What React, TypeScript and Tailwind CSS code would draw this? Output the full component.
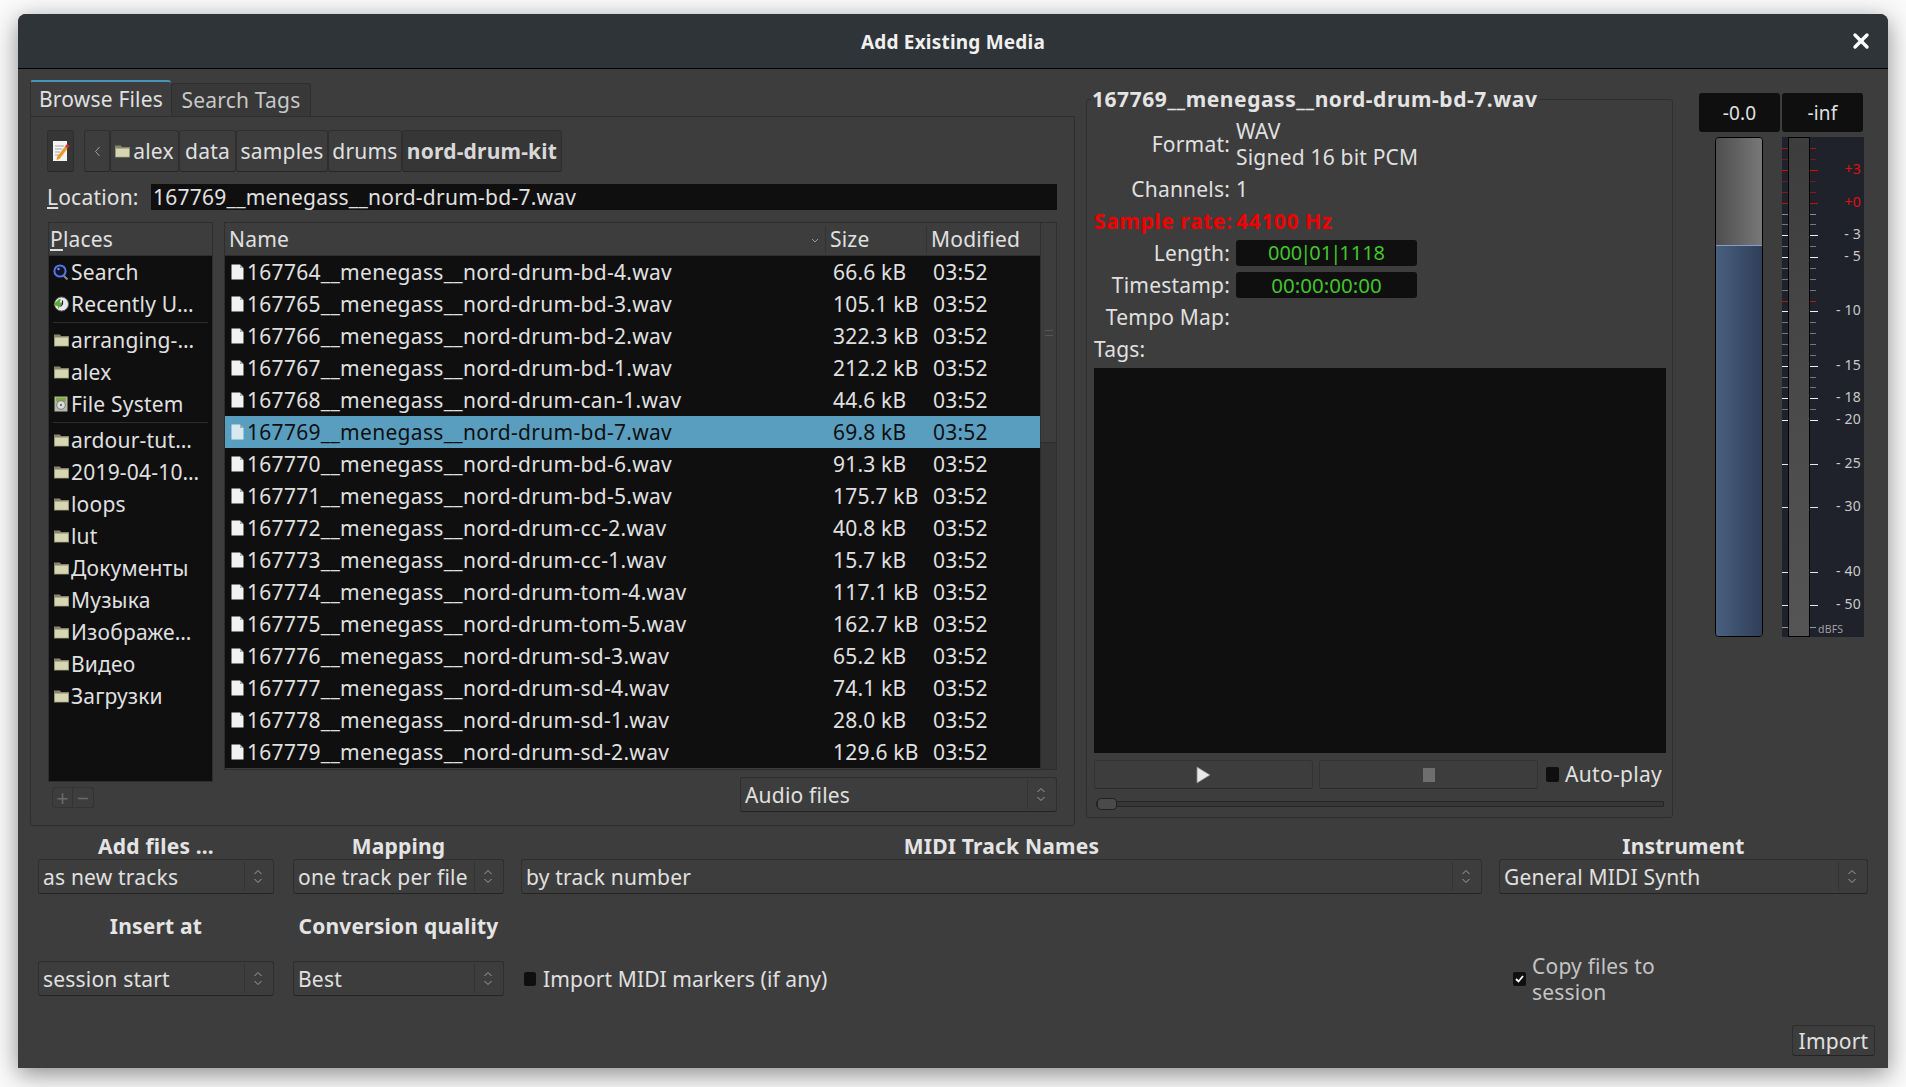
import { X } from "lucide-react";

const files = [
  ["167764__menegass__nord-drum-bd-4.wav", "66.6 kB"],
  ["167765__menegass__nord-drum-bd-3.wav", "105.1 kB"],
  ["167766__menegass__nord-drum-bd-2.wav", "322.3 kB"],
  ["167767__menegass__nord-drum-bd-1.wav", "212.2 kB"],
  ["167768__menegass__nord-drum-can-1.wav", "44.6 kB"],
  ["167769__menegass__nord-drum-bd-7.wav", "69.8 kB"],
  ["167770__menegass__nord-drum-bd-6.wav", "91.3 kB"],
  ["167771__menegass__nord-drum-bd-5.wav", "175.7 kB"],
  ["167772__menegass__nord-drum-cc-2.wav", "40.8 kB"],
  ["167773__menegass__nord-drum-cc-1.wav", "15.7 kB"],
  ["167774__menegass__nord-drum-tom-4.wav", "117.1 kB"],
  ["167775__menegass__nord-drum-tom-5.wav", "162.7 kB"],
  ["167776__menegass__nord-drum-sd-3.wav", "65.2 kB"],
  ["167777__menegass__nord-drum-sd-4.wav", "74.1 kB"],
  ["167778__menegass__nord-drum-sd-1.wav", "28.0 kB"],
  ["167779__menegass__nord-drum-sd-2.wav", "129.6 kB"],
];

const bookmarks = ["ardour-tut…", "2019-04-10…", "loops", "lut", "Документы", "Музыка", "Изображе…", "Видео", "Загрузки"];

// y offset inside the meter strip, colour, long tick or not
const ticks: [number, string, boolean][] = [
  [11, "#a01818", false], [22, "#6e1c1c", false], [33, "#f00000", true], [44, "#6e1c1c", false],
  [55, "#8a1818", false], [66, "#c01010", true], [77, "#8a8a8a", false], [87, "#777777", false],
  [98, "#f0f0f0", true], [109, "#777777", false], [120, "#f0f0f0", true], [131, "#777777", false],
  [142, "#777777", false], [153, "#777777", false], [164, "#b01818", false], [174, "#f0f0f0", true],
  [185, "#777777", false], [196, "#777777", false], [207, "#777777", false], [218, "#777777", false],
  [229, "#f0f0f0", true], [240, "#777777", false], [250, "#777777", false], [261, "#f0f0f0", true],
  [272, "#777777", false], [283, "#f0f0f0", true], [327, "#e8e8e8", true], [370, "#e8e8e8", true],
  [435, "#e8e8e8", true], [468, "#e8e8e8", true], [490, "#999999", false],
];

const scaleLabels: [number, string, string][] = [
  [33, "+3", "#e01010"], [66, "+0", "#e01010"], [98, "- 3", "#c8c8c8"], [120, "- 5", "#c8c8c8"],
  [174, "- 10", "#c8c8c8"], [229, "- 15", "#c8c8c8"], [261, "- 18", "#c8c8c8"], [283, "- 20", "#c8c8c8"],
  [327, "- 25", "#c8c8c8"], [370, "- 30", "#c8c8c8"], [435, "- 40", "#c8c8c8"], [468, "- 50", "#c8c8c8"],
];

function FileIcon({ dim }: { dim?: boolean }) {
  return (
    <svg width="13" height="16" viewBox="0 0 13 16" className="shrink-0">
      <path d="M0.5 0.5H9L12.5 4V15.5H0.5Z" fill={dim ? "#d8e8f0" : "#f2f2f2"} />
      <path d="M9 0.5V4H12.5Z" fill="#a8a8a8" />
    </svg>
  );
}

function FolderIcon() {
  return (
    <svg width="15" height="14" viewBox="0 0 15 14" className="shrink-0">
      <path d="M0 1.5H6L7 3H15V13.5H0Z" fill="#85856a" />
      <path d="M0.8 4.5H14.2V12.8H0.8Z" fill="#d6d6b2" />
    </svg>
  );
}

function SearchIcon() {
  return (
    <svg width="16" height="17" viewBox="0 0 16 17" className="shrink-0">
      <path d="M10 11L14.5 15.5" stroke="#8a8a8a" strokeWidth="2" />
      <circle cx="7" cy="7" r="5.6" fill="#12122a" stroke="#4f78e6" strokeWidth="2" />
      <circle cx="5.5" cy="5" r="1.2" fill="#7f9ad8" />
    </svg>
  );
}

function RecentIcon() {
  return (
    <svg width="16" height="16" viewBox="0 0 16 16" className="shrink-0">
      <circle cx="8.5" cy="8" r="7" fill="#e8e8e8" stroke="#666666" />
      <path d="M0.5 8.5L6 3L8 3.5L6.5 6.5H10L5 13L5 10.5Z" fill="#5aa83a" />
      <path d="M9.5 4.5V8L7.5 10.5" fill="none" stroke="#222222" strokeWidth="1.2" />
    </svg>
  );
}

function DiskIcon() {
  return (
    <svg width="14" height="16" viewBox="0 0 14 16" className="shrink-0">
      <rect x="0.5" y="0.5" width="13" height="15" fill="#b8b8a8" />
      <path d="M2 1.5H12V5L7 8L2 5Z" fill="#7fae3e" />
      <circle cx="7" cy="9" r="4.3" fill="#dcdcdc" stroke="#7a7a7a" />
      <circle cx="7" cy="9" r="1.2" fill="#7a7a7a" />
    </svg>
  );
}

function NoteIcon() {
  return (
    <svg width="18" height="22" viewBox="0 0 18 22">
      <rect x="1" y="1" width="14" height="20" fill="#f4f4f4" />
      <path d="M3 6H12M3 9H10M3 12H8M3 15H7" stroke="#a5a5a5" />
      <path d="M5 17L13 6.5L15.5 8.5L7.5 19L4.5 20Z" fill="#e89a2c" />
      <path d="M13 6.5L15 4L17.5 6L15.5 8.5Z" fill="#d83030" />
    </svg>
  );
}

function Combo({ text, className }: { text: string; className?: string }) {
  return (
    <div className={`flex h-[35px] items-center rounded-[3px] border border-[#2e2e2e] border-b-[#242424] bg-[#3d3d3d] pl-[4px] pr-[2px] ${className ?? ""}`}>
      <span className="flex-1 overflow-hidden whitespace-nowrap text-[#e0e0e0]">{text}</span>
      <div className="flex h-[29px] w-[27px] shrink-0 items-center justify-center border-l border-[#333333]">
        <svg width="10" height="15" viewBox="0 0 10 15" fill="none" stroke="#a0a0a0" strokeWidth="1">
          <path d="M1.5 5L5 1.5L8.5 5M1.5 10L5 13.5L8.5 10" />
        </svg>
      </div>
    </div>
  );
}

function Crumb({ children, className }: { children: React.ReactNode; className?: string }) {
  return (
    <div className={`flex h-[42px] shrink-0 items-center justify-center rounded-[3px] border border-[#2f2f2f] border-b-[#272727] bg-[#3d3d3d] ${className ?? ""}`}>
      {children}
    </div>
  );
}

function BoldLabel({ children }: { children: React.ReactNode }) {
  return <div className="flex h-[27px] items-center justify-center whitespace-nowrap font-bold text-[#e4e4e4]">{children}</div>;
}

function Place({ icon, label }: { icon: React.ReactNode; label: string }) {
  return (
    <div className="flex h-[32px] items-center gap-[2px] pl-[4px]">
      <span className="flex w-[16px] justify-center">{icon}</span>
      <span className="whitespace-nowrap">{label}</span>
    </div>
  );
}

function Meter() {
  return (
    <svg width="82" height="500" viewBox="0 0 82 500" className="block">
      <defs>
        <linearGradient id="bar" x1="0" y1="0" x2="0" y2="1">
          <stop offset="0" stopColor="#3d3d3d" />
          <stop offset="1" stopColor="#555555" />
        </linearGradient>
      </defs>
      <rect width="82" height="500" fill="#1f222a" />
      {ticks.map(([y, color, long]) => (
        <g key={y} fill={color}>
          <rect x="0" y={y} width="6" height="1" />
          <rect x="28" y={y} width={long ? 8 : 6} height="1" />
        </g>
      ))}
      <rect x="6.5" y="0.5" width="21" height="499" fill="url(#bar)" stroke="#000000" />
      {scaleLabels.map(([y, label, color]) => (
        <text key={label} x="79" y={y + 4} textAnchor="end" fontSize="14" fill={color} fontFamily="'Noto Sans', sans-serif">
          {label}
        </text>
      ))}
      <text x="36" y="496" fontSize="10.5" fill="#a0a0a0" fontFamily="'Noto Sans', sans-serif">dBFS</text>
    </svg>
  );
}

export default function App() {
  return (
    <div className="h-[1087px] w-[1906px] overflow-hidden bg-[#fafafa] pl-[18px] pt-[14px] font-['Noto_Sans',sans-serif] text-[21px] leading-[26px] tracking-[0.2px] text-[#e0e0e0]">
      <div className="flex h-[1054px] w-[1870px] flex-col rounded-t-[8px] bg-[#3d3d3d] shadow-[0_6px_24px_rgba(0,0,0,0.45)]">
        {/* Title bar */}
        <div className="relative flex h-[55px] shrink-0 items-center justify-center rounded-t-[8px] border-b border-black bg-[#2f3438] pt-[2px] text-[19px] font-bold text-[#f0f0f0]">
          Add Existing Media
          <X className="absolute right-[15px] top-[15px] h-[24px] w-[24px] text-white" strokeWidth={3.4} />
        </div>

        <div className="flex flex-col pl-[12px] pt-[11px]">
          <div className="flex h-[746px]">
            {/* Notebook */}
            <div className="flex w-[1045px] shrink-0 flex-col">
              <div className="flex h-[36px] items-end">
                <div className="flex h-[36px] w-[141px] items-center justify-center rounded-t-[3px] border-l border-t-2 border-[#4a94bb] border-l-[#2e2e2e] bg-[#3d3d3d]">
                  Browse Files
                </div>
                <div className="flex h-[33px] w-[140px] items-center justify-center rounded-t-[3px] border border-b-0 border-[#2e2e2e] bg-[#383838] text-[#c8c8c8]">
                  Search Tags
                </div>
              </div>
              <div className="h-[710px] rounded-b-[3px] border border-[#2e2e2e] px-[16px] pt-[13px]">
                {/* Path bar */}
                <div className="flex h-[42px]">
                  <Crumb className="w-[27px] bg-[#363636]"><NoteIcon /></Crumb>
                  <div className="w-[10px]" />
                  <Crumb className="w-[26px]">
                    <svg width="7" height="11" viewBox="0 0 7 11" fill="none" stroke="#a0a0a0"><path d="M5.5 1L1.5 5.5L5.5 10" /></svg>
                  </Crumb>
                  <Crumb className="w-[69px] gap-[3px]"><FolderIcon /><span>alex</span></Crumb>
                  <Crumb className="w-[57px]">data</Crumb>
                  <Crumb className="w-[92px]">samples</Crumb>
                  <Crumb className="w-[74px]">drums</Crumb>
                  <Crumb className="w-[160px] bg-[#363636] font-bold text-[#d8d8d8]">nord-drum-kit</Crumb>
                </div>

                {/* Location */}
                <div className="mt-[12px] flex h-[26px] items-center">
                  <span className="w-[104px] shrink-0"><span className="underline underline-offset-2">L</span>ocation:</span>
                  <div className="flex h-[26px] w-[906px] items-center bg-[#0f0f0f] pl-[2px] tracking-[0.25px]">167769__menegass__nord-drum-bd-7.wav</div>
                </div>

                <div className="mt-[12px] flex">
                  {/* Places */}
                  <div className="ml-px w-[165px] shrink-0">
                    <div className="h-[560px] border border-[#2e2e2e] bg-[#0f0f0f]">
                      <div className="flex h-[33px] items-center border-b border-[#2e2e2e] bg-[#3d3d3d] pl-px">
                        <span><span className="underline underline-offset-2">P</span>laces</span>
                      </div>
                      <Place icon={<SearchIcon />} label="Search" />
                      <Place icon={<RecentIcon />} label="Recently U…" />
                      <div className="mx-[4px] mb-px mt-[2px] h-px bg-[#2e2e2e]" />
                      <Place icon={<FolderIcon />} label="arranging-…" />
                      <Place icon={<FolderIcon />} label="alex" />
                      <Place icon={<DiskIcon />} label="File System" />
                      <div className="mx-[4px] mb-px mt-[2px] h-px bg-[#2e2e2e]" />
                      {bookmarks.map((b) => (
                        <Place key={b} icon={<FolderIcon />} label={b} />
                      ))}
                    </div>
                    <div className="ml-[4px] mt-[5px] flex h-[21px] text-[#6a6a6a]">
                      <div className="flex w-[21px] items-center justify-center rounded-l-[3px] border border-[#333333]">+</div>
                      <div className="flex w-[21px] items-center justify-center rounded-r-[3px] border border-l-0 border-[#333333]">−</div>
                    </div>
                  </div>

                  {/* File list */}
                  <div className="ml-[11px] flex w-[833px] flex-col">
                    <div className="flex h-[548px] border border-[#2e2e2e]">
                      <div className="min-w-0 flex-1">
                        <div className="flex h-[33px] items-center border-b border-[#2e2e2e]">
                          <div className="relative flex h-[27px] w-[601px] items-center border-r border-[#333333] pl-[4px]">
                            Name
                            <svg width="8" height="5" viewBox="0 0 8 5" fill="none" stroke="#999999" className="absolute right-[6px] top-[12px]"><path d="M1 1L4 4L7 1" /></svg>
                          </div>
                          <div className="flex h-[27px] w-[101px] items-center border-r border-[#333333] pl-[4px]">Size</div>
                          <div className="pl-[4px]">Modified</div>
                        </div>
                        <div className="bg-[#0f0f0f]">
                          {files.map(([name, size], i) => (
                            <div
                              key={name}
                              className={i === 5
                                ? "flex h-[32px] items-center bg-[#5a9ebf] pl-[6px] text-[#0f0f0f]"
                                : "flex h-[32px] items-center pl-[6px]"}
                            >
                              <span className="flex w-[16px] shrink-0"><FileIcon dim={i === 5} /></span>
                              <span className="w-[586px] shrink-0 whitespace-nowrap tracking-[0.3px]">{name}</span>
                              <span className="w-[100px] shrink-0 whitespace-nowrap">{size}</span>
                              <span>03:52</span>
                            </div>
                          ))}
                        </div>
                      </div>
                      {/* Scrollbar */}
                      <div className="w-[16px] shrink-0 border-l border-[#2e2e2e] bg-[#363636]">
                        <div className="flex h-[220px] items-center justify-center border-b border-[#2e2e2e] bg-[#3d3d3d]">
                          <div className="h-[6px] w-[8px] border-y border-[#555555]" />
                        </div>
                      </div>
                    </div>
                    <div className="mt-[7px] self-end">
                      <Combo text="Audio files" className="w-[317px]" />
                    </div>
                  </div>
                </div>
              </div>
            </div>

            {/* Sound file info */}
            <div className="relative ml-[11px] mt-[19px] h-[719px] w-[587px] shrink-0 rounded-[3px] border border-[#2e2e2e] px-[7px] pt-[18px]">
              <div className="absolute -top-[14px] left-[4px] whitespace-nowrap bg-[#3d3d3d] px-[1px] font-bold tracking-[0.55px] text-[#e4e4e4]">
                167769__menegass__nord-drum-bd-7.wav
              </div>
              <div className="flex flex-col gap-[6px]">
                <div className="flex items-center gap-[6px]">
                  <span className="w-[136px] text-right">Format:</span>
                  <div>WAV<br />Signed 16 bit PCM</div>
                </div>
                <div className="flex gap-[6px]">
                  <span className="w-[136px] text-right">Channels:</span>
                  <span>1</span>
                </div>
                <div className="flex gap-[6px] font-bold tracking-[0.6px] text-[#f00000]">
                  <span className="w-[136px] whitespace-nowrap text-right">Sample rate:</span>
                  <span>44100 Hz</span>
                </div>
                <div className="flex gap-[6px]">
                  <span className="w-[136px] text-right">Length:</span>
                  <div className="h-[26px] w-[181px] rounded-[3px] bg-[#0f0f0f] text-center text-[20px] tracking-normal text-[#43c52a]">
                    000<span className="-mx-[2px]">|</span>01<span className="-mx-[2px]">|</span>1118
                  </div>
                </div>
                <div className="flex gap-[6px]">
                  <span className="w-[136px] text-right">Timestamp:</span>
                  <div className="h-[26px] w-[181px] rounded-[3px] bg-[#0f0f0f] text-center text-[20.5px] tracking-normal text-[#43c52a]">00:00:00:00</div>
                </div>
                <div className="flex gap-[6px]">
                  <span className="w-[136px] whitespace-nowrap text-right">Tempo Map:</span>
                </div>
                <div>Tags:</div>
              </div>
              <div className="mt-[6px] h-[385px] w-[572px] bg-[#0f0f0f]" />
              <div className="mt-[7px] flex h-[29px] items-center">
                <div className="flex h-[29px] w-[219px] items-center justify-center rounded-[3px] border border-[#333333] border-b-[#2a2a2a]">
                  <svg width="15" height="18" viewBox="0 0 15 18"><path d="M1 1L14 9L1 17Z" fill="#e8e8e8" stroke="#888888" strokeWidth="0.8" /></svg>
                </div>
                <div className="ml-[6px] flex h-[29px] w-[219px] items-center justify-center rounded-[3px] border border-[#333333] border-b-[#2a2a2a]">
                  <div className="h-[14px] w-[12px] bg-[#6e6e6e]" />
                </div>
                <div className="ml-[8px] h-[15px] w-[13px] shrink-0 rounded-[2px] bg-[#0f0f0f]" />
                <span className="ml-[6px] -translate-y-px whitespace-nowrap tracking-[0.3px]">Auto-play</span>
              </div>
              <div className="relative mt-[9px] h-[12px] w-[570px]">
                <div className="absolute left-[2px] top-[3px] h-[6px] w-[568px] rounded-[1px] border border-[#252525] bg-[#363636]" />
                <div className="absolute left-[3px] top-0 h-[12px] w-[20px] rounded-[4px] border border-[#222222] bg-[#4a4a4a]" />
              </div>
            </div>

            {/* Meters */}
            <div className="ml-[26px] mt-[13px] w-[165px] shrink-0">
              <div className="flex h-[39px] gap-[2px]">
                <div className="flex w-[81px] items-center justify-center rounded-[3px] bg-[#0f0f0f] text-[19px]">-0.0</div>
                <div className="flex w-[81px] items-center justify-center rounded-[3px] bg-[#0f0f0f] text-[19px]">-inf</div>
              </div>
              <div className="mt-[5px] flex">
                <div className="ml-[16px] flex h-[500px] w-[48px] flex-col overflow-hidden rounded-[4px] border border-black">
                  <div className="h-[107px] bg-gradient-to-r from-[#4e4e4e] to-[#787878]" />
                  <div className="flex-1 border-t border-[#7f9fc8] bg-gradient-to-r from-[#48607f] to-[#2f3f58]" />
                </div>
                <div className="ml-[19px]"><Meter /></div>
              </div>
            </div>
          </div>

          {/* Import options */}
          <div className="ml-[8px] mt-[6px] grid grid-cols-[238px_211px_961px_369px] gap-x-[17px]">
            <div className="w-[236px]"><BoldLabel>Add files …</BoldLabel></div>
            <BoldLabel>Mapping</BoldLabel>
            <BoldLabel>MIDI Track Names</BoldLabel>
            <BoldLabel>Instrument</BoldLabel>

            <div className="w-[236px]"><Combo text="as new tracks" /></div>
            <Combo text="one track per file" />
            <Combo text="by track number" />
            <Combo text="General MIDI Synth" />

            <div className="mt-[18px] w-[236px]"><BoldLabel>Insert at</BoldLabel></div>
            <div className="mt-[18px]"><BoldLabel>Conversion quality</BoldLabel></div>
            <div />
            <div />

            <div className="mt-[22px] w-[236px]"><Combo text="session start" /></div>
            <div className="mt-[22px]"><Combo text="Best" /></div>
            <div className="mt-[22px] flex h-[35px] items-center pl-[3px]">
              <div className="h-[14px] w-[12px] rounded-[2px] bg-[#0f0f0f]" />
              <span className="ml-[7px] tracking-[0.1px]">Import MIDI markers (if any)</span>
            </div>
            <div className="mt-[22px] flex h-[35px] items-center pl-[14px]">
              <div className="flex h-[14px] w-[13px] shrink-0 items-center justify-center rounded-[2px] bg-[#0f0f0f]">
                <svg width="9" height="8" viewBox="0 0 9 8" fill="none" stroke="#ffffff" strokeWidth="1.8"><path d="M1 4L3.5 6.5L8 1" /></svg>
              </div>
              <span className="ml-[6px] w-[160px] text-[#c4c4c4]">Copy files to session</span>
            </div>
          </div>

          <div className="mt-[29px] flex justify-end pr-[13px]">
            <div className="flex h-[31px] w-[83px] items-center justify-center rounded-[3px] border border-[#2e2e2e] border-b-[#242424] bg-[#3d3d3d]">Import</div>
          </div>
        </div>
      </div>
    </div>
  );
}
